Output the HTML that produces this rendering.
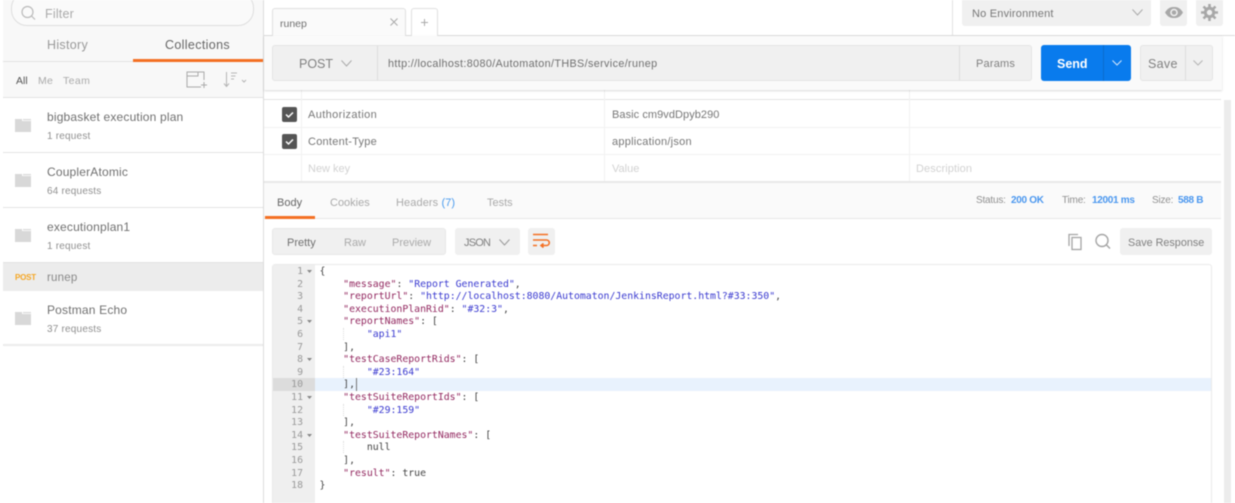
<!DOCTYPE html>
<html><head><meta charset="utf-8"><style>
html,body{margin:0;padding:0;background:#fff}
#p{position:relative;width:1235px;height:503px;overflow:hidden;background:#fff;font-family:"Liberation Sans",sans-serif;font-size:11px;color:#808080;filter:blur(.45px)}
#p div,#p svg{position:absolute}
.t{white-space:nowrap;line-height:14px;margin-top:1px}
.n{font-size:12px;color:#707070;left:47px;letter-spacing:.18px}
.s{font-size:10px;color:#909090;left:47px;letter-spacing:.2px}
.c{font-family:"DejaVu Sans Mono",monospace;font-size:9.84px;white-space:pre;line-height:12.6px}
.k{color:#92275f}.v{color:#3a3ad0}.d{color:#444}
</style></head><body><div id="p">
<!-- sidebar -->
<div style="left:3px;top:0;width:260px;height:503px;background:#fff"></div>
<div style="left:3px;top:0;width:260px;height:97px;background:#f8f8f8"></div>
<div style="left:263px;top:0;width:1px;height:503px;background:#dcdcdc"></div>
<div style="left:11px;top:-8px;width:241px;height:32px;border:1px solid #dedede;border-radius:16px;background:#fafafa"></div>
<svg style="left:20px;top:5px" width="17" height="17" fill="none" stroke="#bbb" stroke-width="1.2"><circle cx="7.5" cy="7" r="5.5"/><path d="M11.5 11l3.5 3.5"/></svg>
<div class="t" style="left:45px;top:6px;font-size:12.5px;color:#aaa;letter-spacing:.2px">Filter</div>
<div class="t" style="left:47px;top:37px;font-size:12.5px;color:#999;letter-spacing:.3px">History</div>
<div class="t" style="left:165px;top:37px;font-size:12.5px;color:#666;letter-spacing:.35px">Collections</div>
<div style="left:3px;top:61px;width:260px;height:1px;background:#e2e2e2"></div>
<div style="left:133px;top:59px;width:130px;height:2.5px;background:#f47023"></div>
<div class="t" style="left:16px;top:73px;font-size:10.5px;color:#555">All</div>
<div class="t" style="left:38px;top:73px;font-size:10.5px;color:#aaa;letter-spacing:.2px">Me</div>
<div class="t" style="left:63px;top:73px;font-size:10.5px;color:#aaa;letter-spacing:.4px">Team</div>
<svg style="left:184px;top:69px" width="26" height="21" fill="none" stroke="#aaa" stroke-width="1"><path d="M17 18H3V3h17v8M3 7h11V3M20 13v6M17 16h6"/></svg>
<svg style="left:221px;top:71px" width="28" height="18" fill="none" stroke="#b5b5b5" stroke-width="1"><path d="M5.5 1v14M3 12.5l2.500 3 2.500-3M10 2h6M10 5h4.500M10 8h3M21 9l2 2 2-2"/></svg>
<div style="left:3px;top:97px;width:260px;height:1px;background:#e3e3e3"></div>
<div style="left:3px;top:152px;width:260px;height:1px;background:#e3e3e3"></div>
<div style="left:3px;top:207px;width:260px;height:1px;background:#e3e3e3"></div>
<div style="left:3px;top:262px;width:260px;height:29px;background:#ececec;border-top:1px solid #e3e3e3;box-sizing:border-box"></div>
<div style="left:3px;top:344px;width:260px;height:2px;background:#ebebeb"></div>
<svg style="left:15px;top:118px" width="17" height="14" fill="#d8d8d8"><path d="M0 1h7v2h9v11H0z"/><path d="M8 1h8v1.200H8z"/></svg>
<svg style="left:15px;top:173px" width="17" height="14" fill="#d8d8d8"><path d="M0 1h7v2h9v11H0z"/><path d="M8 1h8v1.200H8z"/></svg>
<svg style="left:15px;top:228px" width="17" height="14" fill="#d8d8d8"><path d="M0 1h7v2h9v11H0z"/><path d="M8 1h8v1.200H8z"/></svg>
<svg style="left:15px;top:311px" width="17" height="14" fill="#d8d8d8"><path d="M0 1h7v2h9v11H0z"/><path d="M8 1h8v1.200H8z"/></svg>
<div class="t n" style="top:109px">bigbasket execution plan</div>
<div class="t s" style="top:129px">1 request</div>
<div class="t n" style="top:164px">CouplerAtomic</div>
<div class="t s" style="top:184px">64 requests</div>
<div class="t n" style="top:219px">executionplan1</div>
<div class="t s" style="top:239px">1 request</div>
<div class="t" style="left:15px;top:270px;font-size:8px;font-weight:bold;color:#f5a623;letter-spacing:-.2px">POST</div>
<div class="t" style="left:47px;top:270px;font-size:11.5px;color:#888;letter-spacing:.2px">runep</div>
<div class="t n" style="top:302px">Postman Echo</div>
<div class="t s" style="top:322px">37 requests</div>
<!-- tabs -->
<div style="left:264px;top:35px;width:971px;height:1px;background:#dcdcdc"></div>
<div style="left:272px;top:8px;width:134px;height:28px;border:1px solid #e0e0e0;border-bottom:none;border-radius:3px 3px 0 0;background:#fafafa;box-sizing:border-box"></div>
<div class="t" style="left:280px;top:16px;font-size:10.5px;color:#707070">runep</div>
<svg style="left:389px;top:17px" width="10" height="10" stroke="#aaa" stroke-width="1"><path d="M1.5 1.5l7 7M8.5 1.5l-7 7"/></svg>
<div style="left:411px;top:8px;width:27px;height:28px;border:1px solid #e0e0e0;border-bottom:none;border-radius:3px 3px 0 0;background:#fff;box-sizing:border-box"></div>
<svg style="left:420px;top:18px" width="9" height="9" stroke="#aaa" stroke-width="1"><path d="M4.5 1v7M1 4.5h7"/></svg>
<div style="left:952px;top:0;width:1px;height:35px;background:#e2e2e2"></div>
<div style="left:962px;top:0;width:189px;height:26px;background:#f0f0f0;border-radius:0 0 3px 3px"></div>
<div class="t" style="left:972px;top:6px;font-size:11px;color:#777;letter-spacing:.2px">No Environment</div>
<svg style="left:1131px;top:8px" width="13" height="9" fill="none" stroke="#aaa" stroke-width="1"><path d="M1.5 1.5L6.500 7l5-5.500"/></svg>
<div style="left:1160px;top:0;width:27px;height:26px;background:#f0f0f0;border-radius:0 0 3px 3px"></div>
<svg style="left:1165px;top:6px" width="18" height="13"><path d="M0 6.500C3 1.500 6 1 9 1s6 .5 9 5.500C15 11.500 12 12 9 12s-6-.5-9-5.500z" fill="#a8a8a8"/><circle cx="9" cy="6.500" r="3.800" fill="#f0f0f0"/><circle cx="9" cy="6.500" r="2.300" fill="#a8a8a8"/></svg>
<div style="left:1196px;top:0;width:27px;height:26px;background:#f0f0f0;border-radius:0 0 3px 3px"></div>
<svg style="left:1201px;top:4px" width="17" height="17" fill="none" stroke="#a8a8a8"><circle cx="8.500" cy="8.500" r="4.200" stroke-width="3"/><path d="M8.500 0v3.500M8.500 13.500V17M0 8.500h3.500M13.500 8.500H17M2.500 2.500l2.500 2.500M12 12l2.500 2.500M14.500 2.500L12 5M5 12l-2.500 2.500" stroke-width="2.600"/></svg>
<!-- table -->
<div style="left:264px;top:99px;width:957px;height:1px;background:#e3e3e3"></div>
<div style="left:264px;top:127px;width:957px;height:1px;background:#f2f2f2"></div>
<div style="left:264px;top:154px;width:957px;height:1px;background:#f2f2f2"></div>
<div style="left:264px;top:181px;width:957px;height:2px;background:#e8e8e8"></div>
<div style="left:301px;top:90px;width:1px;height:91px;background:#f2f2f2"></div>
<div style="left:604px;top:90px;width:1px;height:91px;background:#f2f2f2"></div>
<div style="left:909px;top:90px;width:1px;height:91px;background:#f2f2f2"></div>
<svg style="left:282px;top:107px" width="16" height="15"><rect width="15" height="15" rx="2" fill="#555"/><path d="M4 7.500l2.500 2.500 4.500-4.500" fill="none" stroke="#fff" stroke-width="1.500"/></svg>
<svg style="left:282px;top:134px" width="16" height="15"><rect width="15" height="15" rx="2" fill="#555"/><path d="M4 7.500l2.500 2.500 4.500-4.500" fill="none" stroke="#fff" stroke-width="1.500"/></svg>
<div class="t" style="left:308px;top:107px;font-size:11px;color:#777;letter-spacing:.38px">Authorization</div>
<div class="t" style="left:308px;top:134px;font-size:11px;color:#777;letter-spacing:.25px">Content-Type</div>
<div class="t" style="left:308px;top:161px;font-size:11px;color:#d2d2d2">New key</div>
<div class="t" style="left:612px;top:107px;font-size:11px;color:#777;letter-spacing:.06px">Basic cm9vdDpyb290</div>
<div class="t" style="left:612px;top:134px;font-size:11px;color:#777;letter-spacing:.25px">application/json</div>
<div class="t" style="left:612px;top:161px;font-size:11px;color:#d2d2d2">Value</div>
<div class="t" style="left:916px;top:161px;font-size:11px;color:#d2d2d2;letter-spacing:.1px">Description</div>
<!-- url bar -->
<div style="left:264px;top:36px;width:958px;height:54px;background:#fafafa;box-shadow:0 1px 2px rgba(0,0,0,.15)"></div>
<div style="left:272px;top:45px;height:36px;background:#f0f0f0;border:1px solid #e4e4e4;border-radius:3px;box-sizing:border-box;width:760px"></div>
<div style="left:377px;top:46px;width:1px;height:34px;background:#dedede"></div>
<div style="left:959px;top:46px;width:1px;height:34px;background:#dedede"></div>
<div class="t" style="left:299px;top:56px;font-size:12.5px;color:#808080">POST</div>
<svg style="left:340px;top:59px" width="13" height="9" fill="none" stroke="#aaa" stroke-width="1"><path d="M1.5 1.5L6.500 7l5-5.500"/></svg>
<div class="t" style="left:388px;top:56px;font-size:10.8px;color:#707070;letter-spacing:.36px">http://localhost:8080/Automaton/THBS/service/runep</div>
<div class="t" style="left:976px;top:56px;font-size:11px;color:#808080;letter-spacing:.2px">Params</div>
<div style="left:1041px;top:45px;width:90px;height:36px;background:#097bed;border-radius:3px"></div>
<div style="left:1103px;top:45px;width:1px;height:36px;background:#0a6bcc"></div>
<div class="t" style="left:1057px;top:56px;font-size:12.5px;font-weight:bold;color:#fff">Send</div>
<svg style="left:1111px;top:59px" width="12" height="8" fill="none" stroke="#cfe4fb" stroke-width="1.100"><path d="M1.5 1.500L6 6l4.500-4.500"/></svg>
<div style="left:1140px;top:45px;width:73px;height:36px;background:#f0f0f0;border:1px solid #e4e4e4;border-radius:3px;box-sizing:border-box"></div>
<div style="left:1185px;top:46px;width:1px;height:34px;background:#dedede"></div>
<div class="t" style="left:1148px;top:56px;font-size:12.5px;color:#808080;letter-spacing:.3px">Save</div>
<svg style="left:1192px;top:59px" width="12" height="8" fill="none" stroke="#b5b5b5" stroke-width="1"><path d="M1.5 1.500L6 6l4.500-4.500"/></svg>
<!-- scrollbar -->
<div style="left:1224px;top:100px;width:7px;height:403px;background:#ececec"></div>
<!-- response tabs -->
<div style="left:264px;top:183px;width:957px;height:35px;background:#fafafa"></div>
<div style="left:264px;top:218px;width:957px;height:1px;background:#e8e8e8"></div>
<div style="left:265px;top:216px;width:50px;height:2.5px;background:#f47023"></div>
<div class="t" style="left:277px;top:195px;font-size:11px;color:#666">Body</div>
<div class="t" style="left:330px;top:195px;font-size:11px;color:#aaa">Cookies</div>
<div class="t" style="left:396px;top:195px;font-size:11px;color:#aaa;letter-spacing:.1px">Headers <span style="color:#4a9bee">(7)</span></div>
<div class="t" style="left:487px;top:195px;font-size:11px;color:#aaa">Tests</div>
<div class="t" style="left:976px;top:193px;font-size:10px;color:#909090;letter-spacing:-.2px">Status:</div>
<div class="t" style="left:1011px;top:193px;font-size:10px;font-weight:bold;color:#4a97ef;letter-spacing:-.3px">200 OK</div>
<div class="t" style="left:1062px;top:193px;font-size:10px;color:#909090;letter-spacing:-.2px">Time:</div>
<div class="t" style="left:1092px;top:193px;font-size:10px;font-weight:bold;color:#4a97ef;letter-spacing:-.3px">12001 ms</div>
<div class="t" style="left:1152px;top:193px;font-size:10px;color:#909090;letter-spacing:-.2px">Size:</div>
<div class="t" style="left:1178px;top:193px;font-size:10px;font-weight:bold;color:#4a97ef;letter-spacing:-.3px">588 B</div>
<!-- toolbar -->
<div style="left:272px;top:228px;width:174px;height:27px;background:#f0f0f0;border:1px solid #e8e8e8;border-radius:3px;box-sizing:border-box"></div>
<div class="t" style="left:287px;top:235px;font-size:11px;color:#707070">Pretty</div>
<div class="t" style="left:344px;top:235px;font-size:11px;color:#aaa">Raw</div>
<div class="t" style="left:392px;top:235px;font-size:11px;color:#aaa">Preview</div>
<div style="left:455px;top:228px;width:65px;height:27px;background:#f0f0f0;border-radius:3px"></div>
<div class="t" style="left:464px;top:235px;font-size:11px;color:#808080;letter-spacing:-.8px">JSON</div>
<svg style="left:498px;top:238px" width="13" height="9" fill="none" stroke="#999" stroke-width="1"><path d="M1.5 1.5L6.500 7l5-5.500"/></svg>
<div style="left:528px;top:228px;width:27px;height:27px;background:#f0f0f0;border-radius:3px"></div>
<svg style="left:532px;top:233px" width="19" height="16" fill="none" stroke="#f47023" stroke-width="1.600"><path d="M1 1.500h15M1 7h13.500a2.700 2.700 0 0 1 0 5.500H9M11.500 10.500L9 12.500l2.500 2M1 12.500h4"/></svg>
<svg style="left:1067px;top:233px" width="18" height="18" fill="none" stroke="#a5a5a5" stroke-width="1.300"><path d="M2 13V1.500h9"/><rect x="5" y="4.500" width="9" height="12"/></svg>
<svg style="left:1094px;top:233px" width="18" height="18" fill="none" stroke="#a5a5a5" stroke-width="1.400"><circle cx="8" cy="7.500" r="6"/><path d="M12.500 12l3.500 3.500"/></svg>
<div style="left:1120px;top:228px;width:92px;height:27px;background:#f0f0f0;border-radius:3px"></div>
<div class="t" style="left:1128px;top:235px;font-size:10.8px;color:#808080">Save Response</div>
<!-- editor -->
<div style="left:272px;top:264px;width:940px;height:239px;border:1px solid #eaeaea;border-bottom:none;border-radius:3px 3px 0 0;box-sizing:border-box;background:#fff"></div>
<div style="left:273px;top:265px;width:42px;height:238px;background:#efefef"></div>
<div style="left:273px;top:378px;width:42px;height:13px;background:#dcdcdc"></div>
<div style="left:315px;top:378px;width:896px;height:13px;background:#e8f2fd"></div>
<div style="left:356px;top:378px;width:1px;height:13px;background:#777"></div>
<div style="left:343px;top:328px;width:0;height:12px;border-left:1px dotted #ddd"></div>
<div style="left:343px;top:366px;width:0;height:12px;border-left:1px dotted #ddd"></div>
<div style="left:343px;top:404px;width:0;height:12px;border-left:1px dotted #ddd"></div>
<div style="left:343px;top:441px;width:0;height:12px;border-left:1px dotted #ddd"></div>
<div class="c" style="left:273px;top:266px;width:30px;text-align:right;color:#999">1
2
3
4
5
6
7
8
9
10
11
12
13
14
15
16
17
18</div>
<svg style="left:306px;top:265px" width="8" height="220" fill="#888"><path d="M1 5h5l-2.500 3zM1 55h5l-2.500 3zM1 93h5l-2.500 3zM1 131h5l-2.500 3zM1 169h5l-2.500 3z"/></svg>
<div class="c d" style="left:319.5px;top:266px">{
    <span class="k">"message"</span>: <span class="v">"Report Generated"</span>,
    <span class="k">"reportUrl"</span>: <span class="v">"http://localhost:8080/Automaton/JenkinsReport.html?#33:350"</span>,
    <span class="k">"executionPlanRid"</span>: <span class="v">"#32:3"</span>,
    <span class="k">"reportNames"</span>: [
        <span class="v">"api1"</span>
    ],
    <span class="k">"testCaseReportRids"</span>: [
        <span class="v">"#23:164"</span>
    ],
    <span class="k">"testSuiteReportIds"</span>: [
        <span class="v">"#29:159"</span>
    ],
    <span class="k">"testSuiteReportNames"</span>: [
        null
    ],
    <span class="k">"result"</span>: true
}</div>
</div></body></html>
